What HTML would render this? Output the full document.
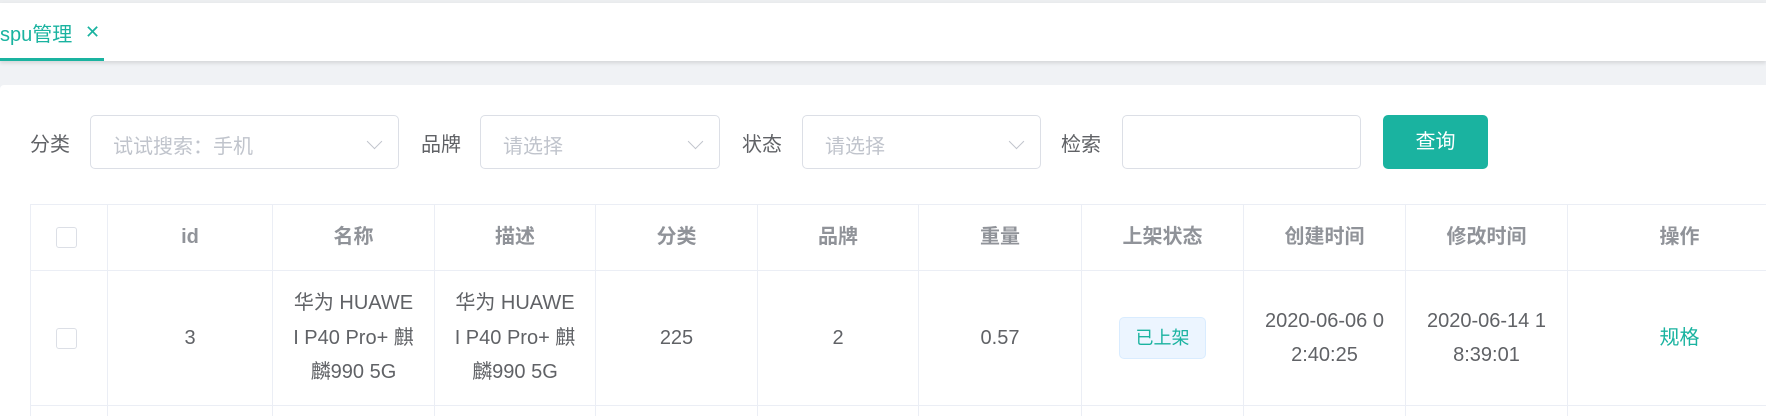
<!DOCTYPE html>
<html><head><meta charset="utf-8"><style>
*{box-sizing:border-box;margin:0;padding:0}
html,body{width:1766px;height:416px;overflow:hidden}
body{background:#f0f2f5;font-family:"Liberation Sans","Noto Sans CJK SC",sans-serif;position:relative}
.hdr{position:absolute;left:0;top:3px;width:1766px;height:58px;background:#fff;box-shadow:0 2px 4px rgba(0,0,0,.12)}
.topline{position:absolute;left:0;top:0;width:1766px;height:3px;background:#eceef0}
.tab{position:absolute;left:0;top:18px;font-size:20px;color:#1ab3a0;white-space:nowrap}
.tabx{position:absolute;left:85px;top:22px;font-size:18px;color:#1ab3a0}
.ul{position:absolute;left:0;top:58px;width:104px;height:3px;background:#1ab3a0}
.card{position:absolute;left:0;top:85px;width:1766px;height:331px;background:#fff;border-radius:4px 0 0 0;overflow:hidden}
.lbl{position:absolute;top:133px;font-size:20px;color:#606266;line-height:24px}
.inp{position:absolute;top:115px;height:54px;border:1px solid #dcdfe6;border-radius:5px;background:#fff}
.ph{position:absolute;left:22px;top:14px;font-size:20px;color:#c0c4cc;white-space:nowrap}
.arr{position:absolute;right:18px;top:20px;width:11px;height:11px;border-right:1.3px solid #c0c4cc;border-bottom:1.3px solid #c0c4cc;transform:rotate(45deg)}
.btn{position:absolute;left:1383px;top:115px;width:105px;height:54px;background:#1ab3a0;border-radius:5px;color:#fff;font-size:20px;text-align:center;line-height:54px}
table{position:absolute;left:30px;top:119px;border-collapse:collapse;table-layout:fixed;width:1761px}
td,th{border:1px solid #ebeef5;text-align:center;font-size:20px;color:#606266;line-height:34.5px;overflow:hidden}
th{height:66px;color:#909399;font-weight:bold}
td{height:135px}
.cb{display:inline-block;width:21px;height:21px;border:1px solid #dcdfe6;border-radius:3px;background:#fff;vertical-align:middle;margin-left:-6px}
.tag{display:inline-block;width:87px;height:42px;line-height:40px;background:#ecf5ff;border:1px solid #d9ecff;border-radius:5px;color:#1ab3a0;font-size:18px}
.lk{color:#1ab3a0}
</style></head><body>
<div class="topline"></div>
<div class="hdr"></div>
<div class="tab">spu管理</div>
<div class="tabx">✕</div>
<div class="ul"></div>
<div class="card">
<table>
<colgroup><col style="width:77px"><col style="width:165px"><col style="width:162px"><col style="width:161px"><col style="width:162px"><col style="width:161px"><col style="width:163px"><col style="width:162px"><col style="width:162px"><col style="width:162px"><col style="width:224px"></colgroup>
<tr><th><span class="cb"></span></th><th>id</th><th>名称</th><th>描述</th><th>分类</th><th>品牌</th><th>重量</th><th>上架状态</th><th>创建时间</th><th>修改时间</th><th>操作</th></tr>
<tr><td><span class="cb"></span></td><td>3</td><td>华为 HUAWE<br>I P40 Pro+ 麒<br>麟990 5G</td><td>华为 HUAWE<br>I P40 Pro+ 麒<br>麟990 5G</td><td>225</td><td>2</td><td>0.57</td><td><span class="tag">已上架</span></td><td>2020-06-06 0<br>2:40:25</td><td>2020-06-14 1<br>8:39:01</td><td><span class="lk">规格</span></td></tr>
<tr><td style="height:10px"></td><td></td><td></td><td></td><td></td><td></td><td></td><td></td><td></td><td></td><td></td></tr>
</table>
</div>
<div class="lbl" style="left:30px">分类</div>
<div class="inp" style="left:90px;width:309px"><span class="ph">试试搜索：手机</span><span class="arr"></span></div>
<div class="lbl" style="left:421px">品牌</div>
<div class="inp" style="left:480px;width:240px"><span class="ph">请选择</span><span class="arr"></span></div>
<div class="lbl" style="left:742px">状态</div>
<div class="inp" style="left:802px;width:239px"><span class="ph">请选择</span><span class="arr"></span></div>
<div class="lbl" style="left:1061px">检索</div>
<div class="inp" style="left:1122px;width:239px"></div>
<div class="btn">查询</div>
</body></html>
